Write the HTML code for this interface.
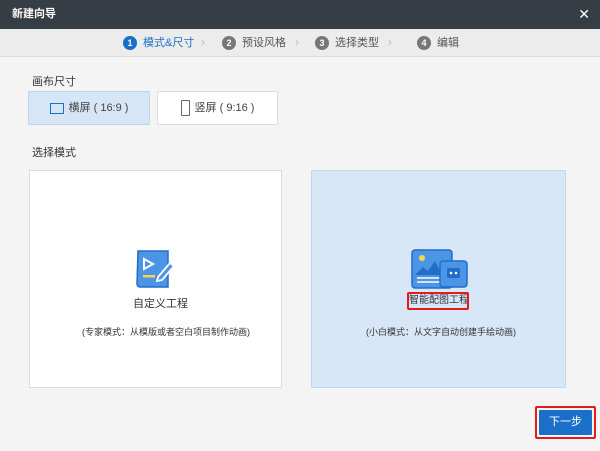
<!DOCTYPE html><html><head><meta charset="utf-8"><style>
*{margin:0;padding:0;box-sizing:border-box}
body{width:600px;height:451px;background:#f4f4f4;font-family:"Liberation Sans","Noto Sans CJK SC",sans-serif;font-size:11px;color:#333;position:relative;overflow:hidden;white-space:nowrap}
.a{position:absolute}
.title{left:0;top:0;width:600px;height:29px;background:#373d45;color:#fff;font-weight:bold;font-size:11px;line-height:29px;padding-left:12px}
.steps{left:0;top:29px;width:600px;height:28px;background:#ececec;border-bottom:1px solid #dcdcdc}
.st{top:7px;font-size:11px;color:#555;line-height:14px}
.st b{display:inline-block;width:14px;height:14px;border-radius:50%;background:#777;color:#fff;text-align:center;font-size:9px;line-height:14px;margin-right:6px;vertical-align:top}
.arr{top:6px;color:#bbb;font-size:12px}
.btn{height:34px;border:1px solid #dcdcdc;background:#fff;border-radius:2px;line-height:32px;text-align:center;font-size:11px;color:#444}
.card{top:170px;height:218px;border:1px solid #dcdcdc;background:#fff}
</style></head><body>
<div class="a title">新建向导<span style="position:absolute;right:10px;top:0;font-size:14px;font-weight:normal">✕</span></div>
<div class="a steps">
<div class="a st" style="left:123px;color:#1a6fc9"><b style="background:#1a6fc9">1</b>模式&amp;尺寸</div>
<div class="a arr" style="left:201px">›</div>
<div class="a st" style="left:222px"><b>2</b>预设风格</div>
<div class="a arr" style="left:295px">›</div>
<div class="a st" style="left:315px"><b>3</b>选择类型</div>
<div class="a arr" style="left:388px">›</div>
<div class="a st" style="left:417px"><b>4</b>编辑</div>
</div>
<div class="a" style="left:32px;top:73px">画布尺寸</div>
<div class="a btn" style="left:28px;top:91px;width:122px;background:#d7e6f6;border-color:#bcd3ec"><span style="display:inline-block;width:14px;height:11px;border:1.5px solid #1a6fc9;vertical-align:middle;margin-right:5px"></span>横屏 ( 16:9 )</div>
<div class="a btn" style="left:157px;top:91px;width:121px"><span style="display:inline-block;width:9px;height:16px;border:1.2px solid #666;border-radius:1px;vertical-align:middle;margin-right:5px"></span>竖屏 ( 9:16 )</div>
<div class="a" style="left:32px;top:144px">选择模式</div>
<div class="a card" style="left:29px;width:253px"></div>
<div class="a card" style="left:311px;width:255px;background:#d8e7f7;border-color:#c5d7ec"></div>
<svg class="a" style="left:134px;top:249px" width="44" height="42" viewBox="0 0 44 42"><path d="M4 2h30v36H6a3 3 0 0 1-3-3z" fill="#4c95e6" stroke="#1f6fc7" stroke-width="1.5"/><path d="M10 10l9 5-9 5z" fill="none" stroke="#fff" stroke-width="2"/><rect x="9" y="26" width="12" height="2.5" fill="#f5d84a"/><path d="M24 28l12-14 4 3-12 14-5 1z" fill="#4c95e6" stroke="#fff" stroke-width="1.8"/><path d="M34 30v8" stroke="#1f6fc7"/></svg>
<div class="a" style="left:133px;top:295px;font-size:11px;color:#333">自定义工程</div>
<div class="a" style="left:82px;top:325px;font-size:9px;color:#333">(专家模式：从模版或者空白项目制作动画)</div>
<svg class="a" style="left:410px;top:249px" width="60" height="42" viewBox="0 0 60 42"><rect x="2" y="1" width="40" height="38" rx="3" fill="#4c95e6" stroke="#1f6fc7" stroke-width="1.5"/><circle cx="12" cy="9" r="3" fill="#f5d84a"/><path d="M5 26l8-8 5 4 7-10 7 14z" fill="#1f6fc7"/><path d="M7 29h24M7 33h24" stroke="#fff" stroke-width="1.5"/><rect x="30" y="12" width="27" height="26" rx="3" fill="#4c95e6" stroke="#1f6fc7" stroke-width="1.5"/><rect x="37" y="19" width="13" height="10" rx="2" fill="#1f6fc7"/><circle cx="41" cy="24" r="1.3" fill="#fff"/><circle cx="46" cy="24" r="1.3" fill="#fff"/></svg>
<div class="a" style="left:407px;top:292px;width:62px;height:18px;border:2px solid #e31b1b;border-radius:2px;font-size:10px;line-height:14px;text-align:center;color:#333;overflow:hidden">智能配图工程</div>
<div class="a" style="left:366px;top:325px;font-size:9px;color:#333">(小白模式：从文字自动创建手绘动画)</div>
<div class="a" style="left:535px;top:406px;width:61px;height:33px;border:2px solid #e31b1b;border-radius:2px;padding:2px"><div style="background:#1a6fc9;color:#fff;height:100%;line-height:25px;text-align:center;font-size:11px;border-radius:1px">下一步</div></div>
</body></html>
